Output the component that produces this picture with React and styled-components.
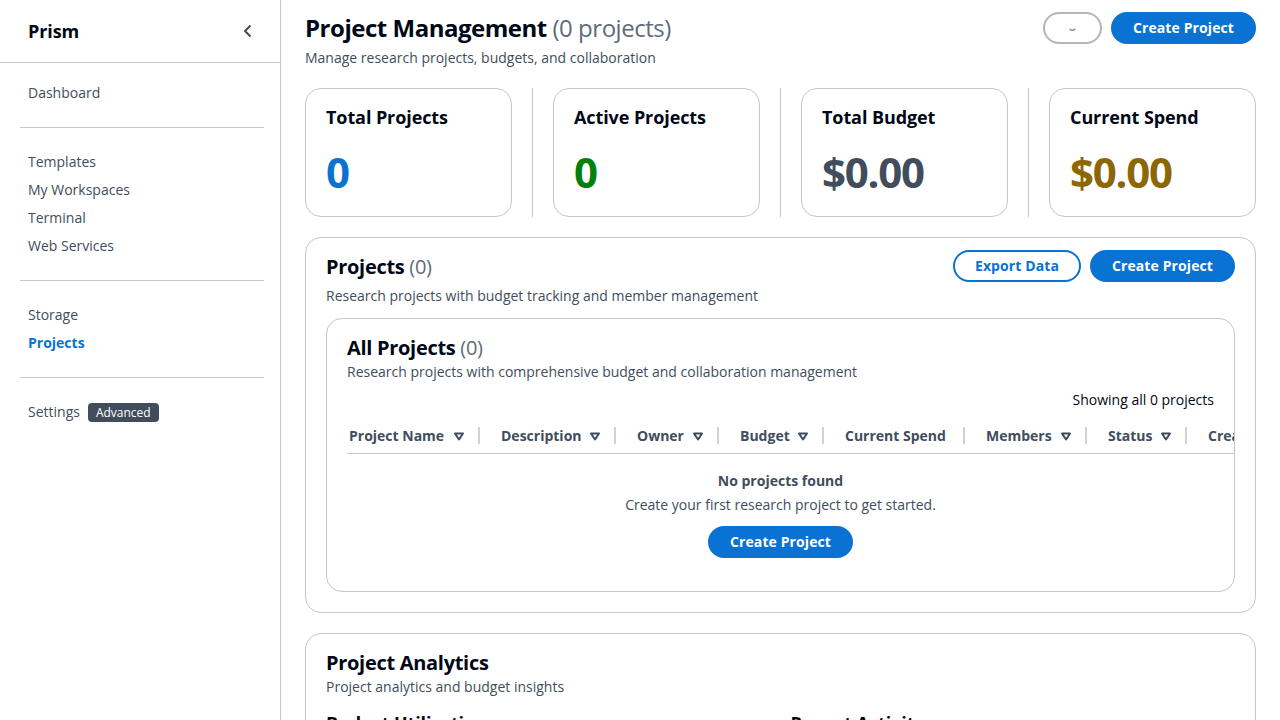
import React from "react";
import styled, { createGlobalStyle } from "styled-components";

const GlobalStyle = createGlobalStyle`
  html, body {
    margin: 0;
    padding: 0;
    overflow: hidden;
  }
  body {
    font-family: "Open Sans", "Noto Sans", sans-serif;
    font-size: 14px;
    line-height: 20px;
    color: #000716;
    background: #ffffff;
  }
  * {
    box-sizing: border-box;
  }
`;

const Layout = styled.div`
  display: flex;
  height: 100vh;
  width: 100%;
`;

const Sidebar = styled.nav`
  width: 281px;
  flex-shrink: 0;
  border-right: 1px solid #c6c6cd;
  height: 100%;
`;

const SideHeader = styled.div`
  height: 63px;
  border-bottom: 1px solid #c6c6cd;
  display: flex;
  align-items: center;
  justify-content: space-between;
  padding: 0 24px 0 28px;
  font-size: 18px;
  font-weight: 700;
  line-height: 22px;
  letter-spacing: -0.005em;
  color: #000716;
`;

const CollapseButton = styled.button`
  border: none;
  background: none;
  padding: 0;
  display: flex;
  color: #414d5c;
  cursor: pointer;
`;

const NavList = styled.ul`
  list-style: none;
  margin: 0;
  padding: 16px 16px 0 20px;
`;

const NavItem = styled.li`
  padding: 4px 8px;
  font-size: 14px;
  line-height: 20px;
  color: ${(p) => (p.$active ? "#0972d3" : "#414d5c")};
  font-weight: ${(p) => (p.$active ? 700 : 400)};
  display: flex;
  align-items: center;
  gap: 8px;
`;

const NavDivider = styled.li`
  height: 1px;
  background: #c6c6cd;
  margin: 20px 0;
`;

const Badge = styled.span`
  background: #414d5c;
  color: #ffffff;
  font-size: 12px;
  line-height: 19px;
  padding: 0 8px;
  border-radius: 4px;
`;

const Main = styled.main`
  flex: 1;
  min-width: 0;
  overflow: hidden;
  padding: 12px 24px 0 24px;
`;

const PageHeader = styled.div`
  display: flex;
  justify-content: space-between;
  align-items: flex-start;
`;

const PageTitle = styled.h1`
  margin: 0;
  font-size: 24px;
  line-height: 32px;
  font-weight: 700;
  letter-spacing: -0.02em;
  color: #000716;
`;

const Counter = styled.span`
  font-weight: 400;
  color: #5f6b7a;
`;

const Description = styled.p`
  margin: ${(p) => p.$mt || 0}px 0 0;
  font-size: 14px;
  line-height: 20px;
  color: #414d5c;
`;

const Actions = styled.div`
  display: flex;
  gap: 9px;
  align-items: center;
  flex-shrink: 0;
`;

const Button = styled.button`
  height: 32px;
  border-radius: 20px;
  border: 2px solid ${(p) => (p.$variant === "loading" ? "#b4b4bb" : "#0972d3")};
  background: ${(p) => (p.$variant === "primary" ? "#0972d3" : "#ffffff")};
  color: ${(p) => (p.$variant === "primary" ? "#ffffff" : "#0972d3")};
  font-family: inherit;
  font-size: 14px;
  font-weight: 700;
  line-height: 22px;
  padding: 0 20px;
  letter-spacing: 0.1px;
  display: inline-flex;
  align-items: center;
  justify-content: center;
  width: ${(p) => (p.$width ? `${p.$width}px` : "auto")};
  cursor: pointer;
`;

const StatsGrid = styled.div`
  display: grid;
  grid-template-columns: 1fr 1px 1fr 1px 1fr 1px 1fr;
  column-gap: 20px;
  margin-top: 20px;
`;

const StatDivider = styled.div`
  background: #c6c6cd;
`;

const StatCard = styled.div`
  border: 1px solid #c6c6cd;
  border-radius: 16px;
  padding: 17px 20px 20px;
`;

const StatTitle = styled.div`
  font-size: 18px;
  line-height: 22px;
  font-weight: 700;
  letter-spacing: -0.005em;
  color: #000716;
`;

const StatValue = styled.div`
  margin-top: 20px;
  font-size: 42px;
  line-height: 48px;
  font-weight: 700;
  letter-spacing: -0.03em;
  color: ${(p) => p.$color};
`;

const Container = styled.section`
  border: 1px solid #c6c6cd;
  border-radius: 16px;
  padding: 12px 20px 20px;
  margin-top: 20px;
`;

const ContainerHeader = styled.div`
  display: flex;
  justify-content: space-between;
  align-items: flex-start;
`;

const SectionTitle = styled.h2`
  margin: 0;
  padding-top: 5px;
  font-size: 20px;
  line-height: 24px;
  font-weight: 700;
  letter-spacing: -0.015em;
  color: #000716;
`;

const InnerContainer = styled.div`
  border: 1px solid #c6c6cd;
  border-radius: 16px;
  padding: 12px 20px 20px;
  margin-top: 12px;
`;

const ShowingText = styled.div`
  margin-top: 8px;
  text-align: right;
  font-size: 14px;
  line-height: 20px;
  color: #000716;
`;

const TableWrap = styled.div`
  margin: 8px -20px 0 0;
  overflow: hidden;
`;

const HeaderRow = styled.div`
  display: flex;
  height: 36px;
  border-bottom: 1px solid #c6c6cd;
`;

const HeaderCell = styled.div`
  position: relative;
  flex-shrink: 0;
  width: ${(p) => p.$w}px;
  display: flex;
  align-items: center;
  justify-content: space-between;
  padding: 0 15px 0 ${(p) => (p.$first ? 2 : 21)}px;
  font-size: 14px;
  font-weight: 700;
  color: #414d5c;
  white-space: nowrap;

  &::after {
    content: "";
    position: absolute;
    right: 0;
    top: 9px;
    width: 2px;
    height: 17px;
    background: #d1d1d6;
    display: ${(p) => (p.$last ? "none" : "block")};
  }
`;

const EmptyState = styled.div`
  display: flex;
  flex-direction: column;
  align-items: center;
  padding: 17px 0 13px;
  color: #414d5c;
`;

const EmptyTitle = styled.div`
  font-weight: 700;
  font-size: 14px;
  line-height: 20px;
`;

const EmptyText = styled.div`
  margin-top: 4px;
  font-size: 14px;
  line-height: 20px;
`;

const EmptyAction = styled.div`
  margin-top: 11px;
`;

const AnalyticsGrid = styled.div`
  display: grid;
  grid-template-columns: 1fr 1fr;
  column-gap: 20px;
  margin-top: 15px;
`;

const SubTitle = styled.h3`
  margin: 0;
  font-size: 18px;
  line-height: 22px;
  font-weight: 700;
  letter-spacing: -0.005em;
  color: #000716;
`;

const SortIcon = () => (
  <svg width="12" height="12" viewBox="0 0 12 12" aria-hidden="true">
    <path
      d="M2 3.5h8L6 9.5z"
      fill="none"
      stroke="currentColor"
      strokeWidth="2"
      strokeLinejoin="round"
    />
  </svg>
);

const ChevronLeft = () => (
  <svg width="16" height="16" viewBox="0 0 16 16" aria-hidden="true">
    <path
      d="M10.5 2.5L5 8l5.5 5.5"
      fill="none"
      stroke="currentColor"
      strokeWidth="2"
      strokeLinejoin="round"
    />
  </svg>
);

const Spinner = () => (
  <svg width="16" height="16" viewBox="0 0 16 16" aria-hidden="true">
    <path
      d="M5.5 9.5 Q8 11.5 10.5 9.5"
      fill="none"
      stroke="#8c8c94"
      strokeWidth="1.6"
      strokeLinecap="round"
    />
  </svg>
);

const columns = [
  { label: "Project Name", w: 133, sort: true },
  { label: "Description", w: 136, sort: true },
  { label: "Owner", w: 103, sort: true },
  { label: "Budget", w: 105, sort: true },
  { label: "Current Spend", w: 141, sort: false },
  { label: "Members", w: 122, sort: true },
  { label: "Status", w: 100, sort: true },
  { label: "Created", w: 140, sort: true },
];

const stats = [
  { title: "Total Projects", value: "0", color: "#0972d3" },
  { title: "Active Projects", value: "0", color: "#037f0c" },
  { title: "Total Budget", value: "$0.00", color: "#414d5c" },
  { title: "Current Spend", value: "$0.00", color: "#8d6605" },
];

const App = () => {
  return (
    <>
      <GlobalStyle />
      <Layout>
        <Sidebar>
          <SideHeader>
            <span>Prism</span>
            <CollapseButton aria-label="Close navigation">
              <ChevronLeft />
            </CollapseButton>
          </SideHeader>
          <NavList>
            <NavItem>Dashboard</NavItem>
            <NavDivider />
            <NavItem>Templates</NavItem>
            <NavItem>My Workspaces</NavItem>
            <NavItem>Terminal</NavItem>
            <NavItem>Web Services</NavItem>
            <NavDivider />
            <NavItem>Storage</NavItem>
            <NavItem $active>Projects</NavItem>
            <NavDivider />
            <NavItem>
              Settings <Badge>Advanced</Badge>
            </NavItem>
          </NavList>
        </Sidebar>

        <Main>
          <PageHeader>
            <div>
              <PageTitle>
                Project Management <Counter>(0 projects)</Counter>
              </PageTitle>
              <Description $mt={4}>
                Manage research projects, budgets, and collaboration
              </Description>
            </div>
            <Actions>
              <Button $variant="loading" $width={59} aria-label="Refresh">
                <Spinner />
              </Button>
              <Button $variant="primary">Create Project</Button>
            </Actions>
          </PageHeader>

          <StatsGrid>
            {stats.map((s, i) => (
              <React.Fragment key={s.title}>
                {i > 0 && <StatDivider />}
                <StatCard>
                  <StatTitle>{s.title}</StatTitle>
                  <StatValue $color={s.color}>{s.value}</StatValue>
                </StatCard>
              </React.Fragment>
            ))}
          </StatsGrid>

          <Container>
            <ContainerHeader>
              <div>
                <SectionTitle>
                  Projects <Counter>(0)</Counter>
                </SectionTitle>
                <Description $mt={7}>
                  Research projects with budget tracking and member management
                </Description>
              </div>
              <Actions>
                <Button>Export Data</Button>
                <Button $variant="primary">Create Project</Button>
              </Actions>
            </ContainerHeader>

            <InnerContainer>
              <SectionTitle>
                All Projects <Counter>(0)</Counter>
              </SectionTitle>
              <Description $mt={2}>
                Research projects with comprehensive budget and collaboration
                management
              </Description>
              <ShowingText>Showing all 0 projects</ShowingText>
              <TableWrap>
                <HeaderRow>
                  {columns.map((c, i) => (
                    <HeaderCell
                      key={c.label}
                      $w={c.w}
                      $first={i === 0}
                      $last={i === columns.length - 1}
                    >
                      <span>{c.label}</span>
                      {c.sort && <SortIcon />}
                    </HeaderCell>
                  ))}
                </HeaderRow>
              </TableWrap>
              <EmptyState>
                <EmptyTitle>No projects found</EmptyTitle>
                <EmptyText>Create your first research project to get started.</EmptyText>
                <EmptyAction>
                  <Button $variant="primary">Create Project</Button>
                </EmptyAction>
              </EmptyState>
            </InnerContainer>
          </Container>

          <Container>
            <SectionTitle>Project Analytics</SectionTitle>
            <Description $mt={2}>Project analytics and budget insights</Description>
            <AnalyticsGrid>
              <SubTitle>Budget Utilization</SubTitle>
              <SubTitle>Recent Activity</SubTitle>
            </AnalyticsGrid>
          </Container>
        </Main>
      </Layout>
    </>
  );
};

export default App;
